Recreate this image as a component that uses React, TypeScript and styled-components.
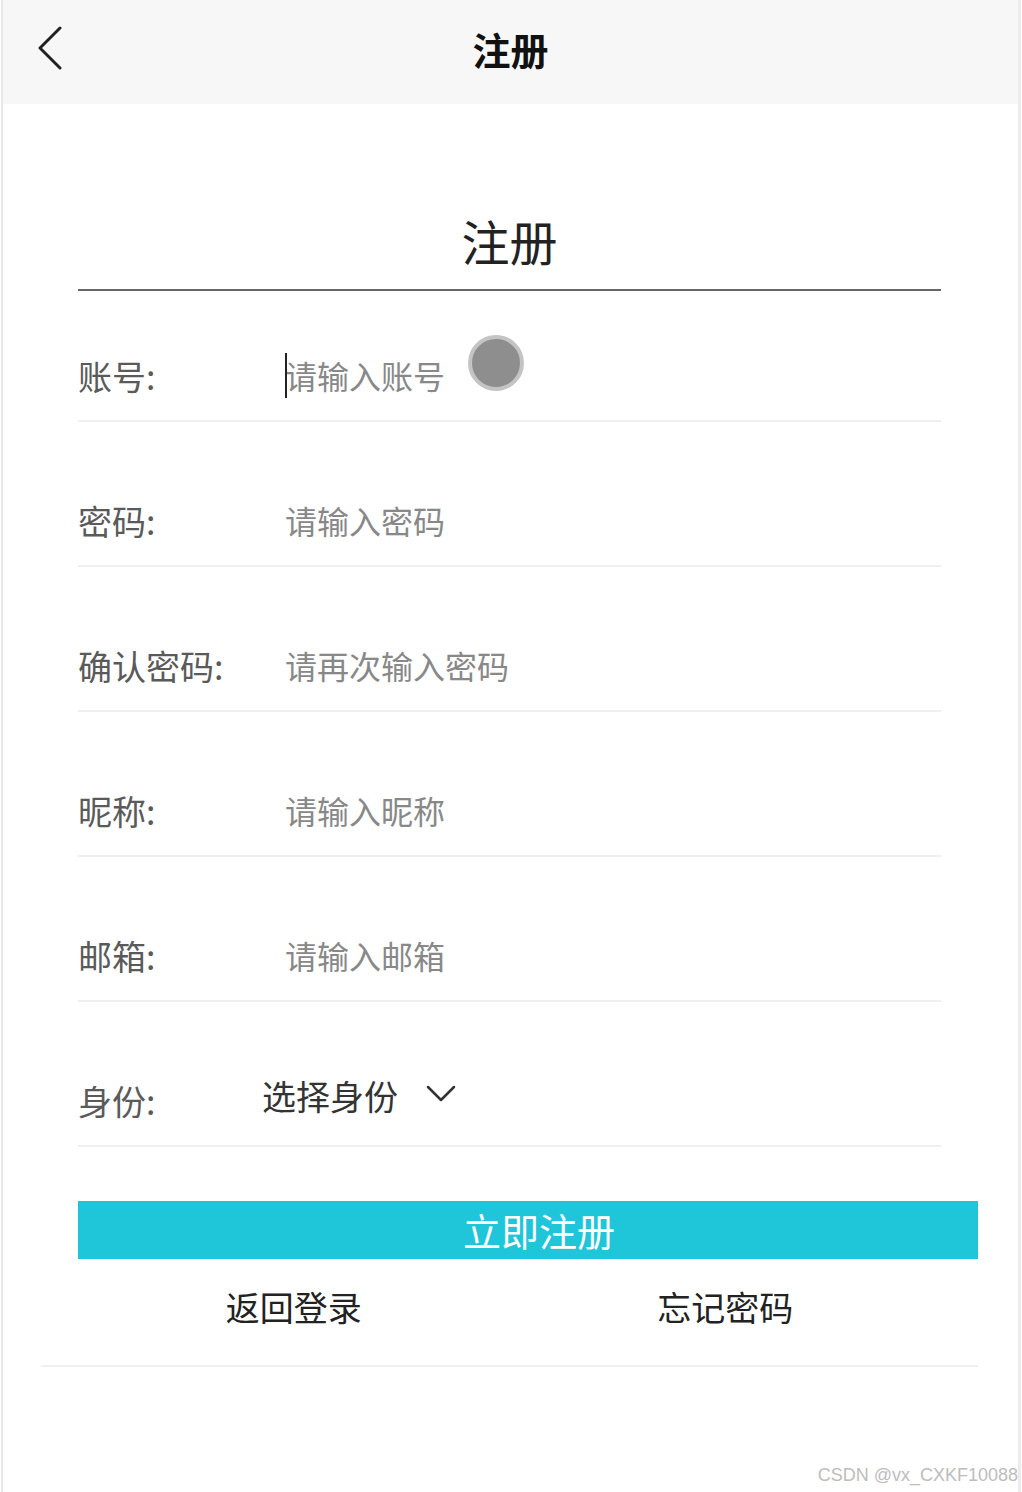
import React from 'react'
import styled, { createGlobalStyle } from 'styled-components'

const GlobalStyle = createGlobalStyle`
    body {
        margin: 0;
        background: #fff;
        font-family: "Microsoft YaHei", "Noto Sans CJK SC", "Noto Sans", sans-serif;
    }
`

const fields = [
    { label: '账号:', placeholder: '请输入账号' },
    { label: '密码:', placeholder: '请输入密码' },
    { label: '确认密码:', placeholder: '请再次输入密码' },
    { label: '昵称:', placeholder: '请输入昵称' },
    { label: '邮箱:', placeholder: '请输入邮箱' },
]

const App = () => {
    return (
        <Page>
            <GlobalStyle />
            <Header>
                <BackButton>
                    <svg width="28" height="44" viewBox="0 0 28 44" fill="none">
                        <polyline points="24,2 4,22 24,42" stroke="#222" strokeWidth="3" strokeLinecap="round" strokeLinejoin="round" />
                    </svg>
                </BackButton>
                <HeaderTitle>注册</HeaderTitle>
            </Header>
            <Content>
                <Heading>注册</Heading>
                <Form>
                    {fields.map((f, i) => (
                        <Row key={f.label} $first={i === 0}>
                            <Label>{f.label}</Label>
                            <Field>
                                {i === 0 && <Caret />}
                                {i === 0 && <Touch />}
                                <Input placeholder={f.placeholder} />
                            </Field>
                        </Row>
                    ))}
                    <Row>
                        <Label>身份:</Label>
                        <Select>
                            选择身份
                            <svg width="30" height="18" viewBox="0 0 30 18" fill="none">
                                <polyline points="2,2 15,15 28,2" stroke="#333" strokeWidth="2.5" strokeLinecap="round" strokeLinejoin="round" />
                            </svg>
                        </Select>
                    </Row>
                </Form>
                <SubmitButton>立即注册</SubmitButton>
                <Links>
                    <LinkText>返回登录</LinkText>
                    <LinkText>忘记密码</LinkText>
                </Links>
                <BottomLine />
            </Content>
            <Watermark>CSDN @vx_CXKF10088</Watermark>
        </Page>
    )
}

export default App

const Page = styled.div`
    position: relative;
    box-sizing: border-box;
    width: 1020px;
    min-height: 1492px;
    margin-left: 1px;
    border-left: 2px solid #e8e8e8;
    border-right: 3px solid #ececec;
`

const Header = styled.div`
    position: relative;
    height: 104px;
    background: #f7f7f7;
    display: flex;
    align-items: center;
    justify-content: center;
`

const BackButton = styled.div`
    position: absolute;
    left: 33px;
    top: 26px;
    display: flex;
`

const HeaderTitle = styled.div`
    font-size: 38px;
    font-weight: bold;
    color: #111;
    margin-top: -8px;
`

const Content = styled.div`
    padding: 106px 39px 0 38px;
`

const Heading = styled.div`
    margin-left: 37px;
    width: 863px;
    text-align: center;
    font-size: 48px;
    line-height: 60px;
    color: #222;
    padding-bottom: 19px;
    border-bottom: 2px solid #666;
`

const Form = styled.div`
    margin-left: 37px;
    width: 863px;
`

const Row = styled.div<{ $first?: boolean }>`
    box-sizing: border-box;
    height: ${p => (p.$first ? '131px' : '145px')};
    padding-bottom: 24px;
    border-bottom: 2px solid #efefef;
    display: flex;
    align-items: flex-end;
`

const Label = styled.div`
    width: 209px;
    flex-shrink: 0;
    font-size: 34px;
    line-height: 40px;
    color: #5a5a5a;
`

const Field = styled.div`
    position: relative;
    flex: 1;
    display: flex;
    margin-bottom: 1px;
    margin-left: -2px;
`

const Input = styled.input`
    flex: 1;
    border: none;
    outline: none;
    padding: 0;
    background: transparent;
    font-family: inherit;
    font-size: 32px;
    line-height: 40px;
    height: 40px;
    color: #333;

    &::placeholder {
        color: #888;
    }
`

const Caret = styled.span`
    position: absolute;
    left: 0;
    top: -2px;
    width: 2px;
    height: 45px;
    background: #222;
`

const Touch = styled.span`
    position: absolute;
    left: 183px;
    top: -20px;
    width: 48px;
    height: 48px;
    border-radius: 50%;
    background: #8e8e8e;
    border: 4px solid #c4c4c4;
`

const Select = styled.div`
    margin-left: -25px;
    margin-bottom: 5px;
    display: flex;
    align-items: center;
    gap: 28px;
    font-size: 34px;
    line-height: 40px;
    color: #333;

    svg {
        margin-top: -4px;
    }
`

const SubmitButton = styled.div`
    margin: 54px 0 0 37px;
    width: 900px;
    height: 58px;
    background: #1fc6da;
    color: #fff;
    font-size: 38px;
    line-height: 58px;
    text-align: center;
    text-indent: 22px;
`

const Links = styled.div`
    margin-left: 37px;
    width: 863px;
    margin-top: 26px;
    display: flex;
    justify-content: space-around;
`

const LinkText = styled.div`
    font-size: 34px;
    line-height: 44px;
    color: #222;
`

const BottomLine = styled.div`
    margin-top: 36px;
    height: 2px;
    width: 937px;
    background: #efefef;
`

const Watermark = styled.div`
    position: absolute;
    right: 0;
    bottom: 6px;
    font-family: "Liberation Sans", Arial, sans-serif;
    font-size: 18px;
    color: #bdbdbd;
`
